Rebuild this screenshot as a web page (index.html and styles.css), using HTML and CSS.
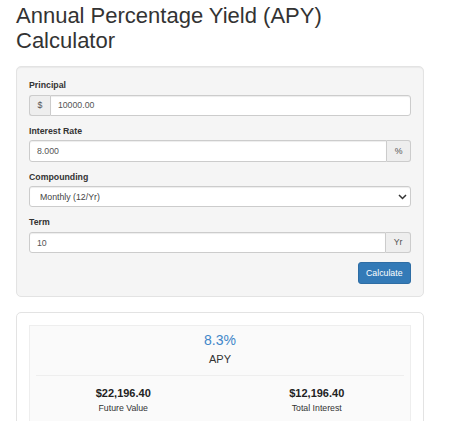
FILE: index.html
```html
<!DOCTYPE html>
<html>
<head>
<meta charset="utf-8">
<link rel="stylesheet" href="styles.css">
</head>
<body>
<div class="container">
  <h1 class="title">Annual Percentage Yield (APY) Calculator</h1>

  <div class="well">
    <div class="form-group">
      <label class="label">Principal</label>
      <div class="input-group">
        <span class="addon addon-left">$</span>
        <input class="control" type="text" value="10000.00">
      </div>
    </div>
    <div class="form-group">
      <label class="label">Interest Rate</label>
      <div class="input-group">
        <input class="control" type="text" value="8.000">
        <span class="addon addon-right">%</span>
      </div>
    </div>
    <div class="form-group">
      <label class="label">Compounding</label>
      <div class="select-wrap">
        <select class="control select">
          <option>Monthly (12/Yr)</option>
        </select>
        <svg class="chevron" width="9" height="6" viewBox="0 0 9 6"><path d="M1 1 L4.5 4.5 L8 1" fill="none" stroke="#333" stroke-width="1.5"/></svg>
      </div>
    </div>
    <div class="form-group">
      <label class="label">Term</label>
      <div class="input-group">
        <input class="control" type="text" value="10">
        <span class="addon addon-right">Yr</span>
      </div>
    </div>
    <div class="actions">
      <button class="btn">Calculate</button>
    </div>
  </div>

  <div class="well well-result">
    <div class="result-box">
      <div class="apy-value">8.3%</div>
      <div class="apy-label">APY</div>
      <div class="divider"></div>
      <div class="stats">
        <div class="stat">
          <div class="stat-value">$22,196.40</div>
          <div class="stat-label">Future Value</div>
        </div>
        <div class="stat">
          <div class="stat-value">$12,196.40</div>
          <div class="stat-label">Total Interest</div>
        </div>
      </div>
    </div>
  </div>
</div>
</body>
</html>
```
FILE: styles.css
```css
* { box-sizing: border-box; }
html, body { margin: 0; padding: 0; background: #fff; }
body {
  font-family: "Liberation Sans", Arial, sans-serif;
  color: #333;
  font-size: 8.75px;
  line-height: 12.5px;
  padding: 3px 26px 0 16px;
  overflow: hidden;
}
.container { width: 408px; }
.title {
  margin: 0 0 13px 0;
  font-size: 22px;
  line-height: 25px;
  font-weight: normal;
  color: #333;
}
.well {
  background: #f5f5f5;
  border: 1px solid #e3e3e3;
  border-radius: 5px;
  padding: 12px;
  box-shadow: inset 0 1px 1px rgba(0,0,0,.05);
}
.form-group { margin-bottom: 9px; }
.label {
  display: block;
  font-weight: bold;
  font-size: 8.75px;
  line-height: 12.5px;
  margin-bottom: 3px;
  color: #333;
}
.input-group { display: flex; height: 21.3px; }
.control {
  flex: 1;
  min-width: 0;
  height: 21.3px;
  border: 1px solid #ccc;
  border-radius: 3px;
  background: #fff;
  font-family: "Liberation Sans", Arial, sans-serif;
  font-size: 8.75px;
  color: #555;
  padding: 0 7px;
  margin: 0;
  box-shadow: inset 0 1px 1px rgba(0,0,0,.075);
}
.addon {
  display: flex;
  align-items: center;
  justify-content: center;
  padding: 0 7.5px;
  background: #eee;
  border: 1px solid #ccc;
  color: #555;
  font-size: 8.75px;
}
.addon-left { border-right: 0; border-radius: 3px 0 0 3px; }
.addon-left + .control { border-radius: 0 3px 3px 0; }
.addon-right { border-left: 0; border-radius: 0 3px 3px 0; }
.input-group .control:first-child { border-radius: 3px 0 0 3px; }
.select-wrap { position: relative; }
.select {
  width: 100%;
  display: block;
  -webkit-appearance: none;
  appearance: none;
  padding-left: 10px;
  color: #444;
}
.chevron {
  position: absolute;
  right: 4px;
  top: 8px;
}
.actions { display: flex; justify-content: flex-end; }
.btn {
  height: 21.7px;
  padding: 0 7.5px;
  background: #337ab7;
  border: 1px solid #2e6da4;
  border-radius: 3px;
  color: #fff;
  font-family: "Liberation Sans", Arial, sans-serif;
  font-size: 8.75px;
  margin: 0;
}
.well-result {
  margin-top: 15.5px;
  background: #fff;
  box-shadow: none;
  padding: 12px 12px 0 12px;
  height: 140px;
}
.result-box {
  background: #fafafa;
  border: 1px solid #eee;
  border-bottom: 0;
  padding: 7px 6px 0 6px;
  height: 100%;
  text-align: center;
}
.apy-value {
  font-size: 14px;
  line-height: 15.4px;
  color: #3f87c9;
}
.apy-label {
  margin-top: 3px;
  font-size: 11px;
  line-height: 15.7px;
  color: #333;
}
.divider {
  margin-top: 7.5px;
  border-top: 1px solid #eee;
}
.stats {
  display: grid;
  grid-template-columns: 1fr 1fr;
  margin: 10px -9.5px 0 -9.5px;
}
.stat-value {
  font-weight: bold;
  font-size: 11px;
  line-height: 15.7px;
  color: #222;
}
.stat-label {
  font-size: 8.75px;
  line-height: 12px;
  color: #333;
}
```
